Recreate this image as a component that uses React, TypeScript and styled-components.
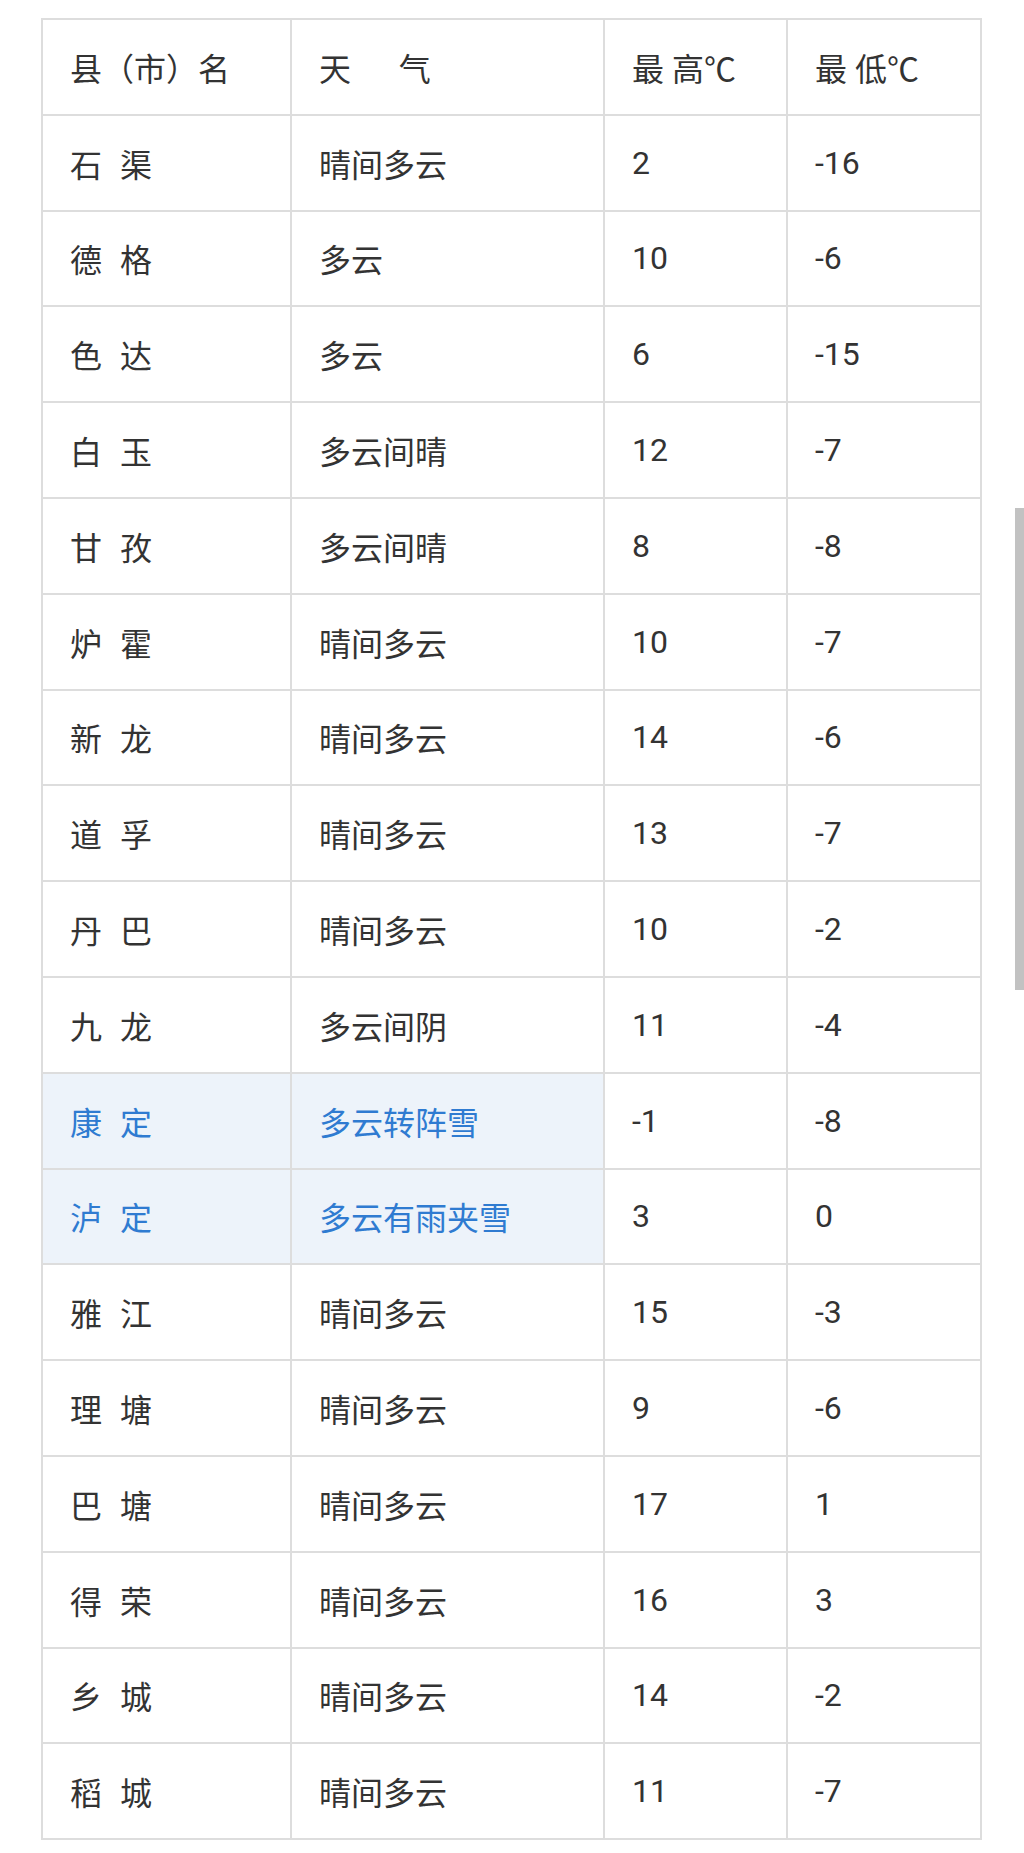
import React from "react";
import styled, { createGlobalStyle, css } from "styled-components";

const GlobalStyle = createGlobalStyle`
  html, body {
    margin: 0;
    padding: 0;
    background: #ffffff;
  }
  body {
    font-family: Roboto, "Noto Sans CJK SC", sans-serif;
    color: #333333;
  }
`;

type Row = {
  name: string;
  weather: string;
  high: string;
  low: string;
  alert?: boolean;
};

const rows: Row[] = [
  { name: "石 渠", weather: "晴间多云", high: "2", low: "-16" },
  { name: "德 格", weather: "多云", high: "10", low: "-6" },
  { name: "色 达", weather: "多云", high: "6", low: "-15" },
  { name: "白 玉", weather: "多云间晴", high: "12", low: "-7" },
  { name: "甘 孜", weather: "多云间晴", high: "8", low: "-8" },
  { name: "炉 霍", weather: "晴间多云", high: "10", low: "-7" },
  { name: "新 龙", weather: "晴间多云", high: "14", low: "-6" },
  { name: "道 孚", weather: "晴间多云", high: "13", low: "-7" },
  { name: "丹 巴", weather: "晴间多云", high: "10", low: "-2" },
  { name: "九 龙", weather: "多云间阴", high: "11", low: "-4" },
  { name: "康 定", weather: "多云转阵雪", high: "-1", low: "-8", alert: true },
  { name: "泸 定", weather: "多云有雨夹雪", high: "3", low: "0", alert: true },
  { name: "雅 江", weather: "晴间多云", high: "15", low: "-3" },
  { name: "理 塘", weather: "晴间多云", high: "9", low: "-6" },
  { name: "巴 塘", weather: "晴间多云", high: "17", low: "1" },
  { name: "得 荣", weather: "晴间多云", high: "16", low: "3" },
  { name: "乡 城", weather: "晴间多云", high: "14", low: "-2" },
  { name: "稻 城", weather: "晴间多云", high: "11", low: "-7" },
];

const headers = ["县（市）名", "天\u00a0\u00a0\u00a0\u00a0\u00a0\u00a0气", "最 高℃", "最 低℃"];
const widths = [249, 313, 183, 194];

const Page = styled.div`
  min-height: 1853px;
  padding: 18px 0 0 41px;
  box-sizing: border-box;
`;

const Table = styled.table`
  width: 941px;
  table-layout: fixed;
  border-collapse: separate;
  border-spacing: 0;
  border-top: 2px solid #dddddd;
  border-left: 2px solid #dddddd;
  font-size: 32px;
`;

const Col = styled.col<{ $w: number }>`
  width: ${(p) => p.$w}px;
`;

const cellBase = css`
  height: 95.8px;
  padding: 0 0 0 27px;
  box-sizing: border-box;
  border-right: 2px solid #dddddd;
  border-bottom: 2px solid #dddddd;
  vertical-align: middle;
  text-align: left;
  white-space: pre;
  color: #333333;
`;

const HeadCell = styled.th`
  ${cellBase}
  font-weight: 400;
`;

const Cell = styled.td<{ $alert?: boolean }>`
  ${cellBase}
  ${(p) =>
    p.$alert &&
    css`
      background: #edf3fa;
      color: #2f7bd1;
    `}
`;

const Spaced = styled.span`
  word-spacing: 10px;
`;

const Scrollbar = styled.div`
  position: fixed;
  top: 508px;
  right: 0;
  width: 9px;
  height: 482px;
  background: #c2c2c2;
`;

export default function App() {
  return (
    <Page>
      <GlobalStyle />
      <Table>
        <colgroup>
          {widths.map((w, i) => (
            <Col key={i} $w={w} />
          ))}
        </colgroup>
        <thead>
          <tr>
            {headers.map((h) => (
              <HeadCell key={h}>{h}</HeadCell>
            ))}
          </tr>
        </thead>
        <tbody>
          {rows.map((r) => (
            <tr key={r.name}>
              <Cell $alert={r.alert}>
                <Spaced>{r.name}</Spaced>
              </Cell>
              <Cell $alert={r.alert}>{r.weather}</Cell>
              <Cell>{r.high}</Cell>
              <Cell>{r.low}</Cell>
            </tr>
          ))}
        </tbody>
      </Table>
      <Scrollbar />
    </Page>
  );
}
